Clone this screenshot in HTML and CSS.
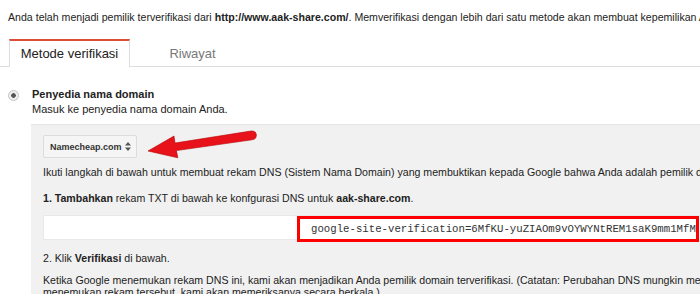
FILE: index.html
```html
<!DOCTYPE html>
<html lang="id">
<head>
  <meta charset="UTF-8" />
  <title>Metode verifikasi</title>
  <link rel="stylesheet" href="styles.css">
</head>
<body>
  <p class="notice">Anda telah menjadi pemilik terverifikasi dari <strong>http://www.aak-share.com/</strong>. Memverifikasi dengan lebih dari satu metode akan membuat kepemilikan Anda lebih aman.</p>

  <div class="tabs">
    <div class="tab active">Metode verifikasi</div>
    <div class="tab">Riwayat</div>
  </div>

  <div class="method">
    <span class="radio"></span>
    <div class="method-body">
      <div class="method-title">Penyedia nama domain</div>
      <div class="method-desc">Masuk ke penyedia nama domain Anda.</div>

      <div class="panel">
        <div class="select">
          <span>Namecheap.com</span>
          <svg width="6" height="9" viewBox="0 0 6 9"><path d="M3 0L6 3.5H0Z M3 9L0 5.5H6Z" fill="#555"/></svg>
        </div>

        <!-- annotation arrow -->
        <svg class="arrow" width="120" height="40" viewBox="0 0 120 40">
          <path d="M7 23 L33 8 L34 15 L110 3 Q115 2.6 115.4 7 Q115.4 11.4 111 11.8 L35.4 22.6 L36.8 29.8 Z" fill="#e8121a" stroke="#b30000" stroke-width="0.6" stroke-linejoin="round"/>
        </svg>

        <p class="line">Ikuti langkah di bawah untuk membuat rekam DNS (Sistem Nama Domain) yang membuktikan kepada Google bahwa Anda adalah pemilik domain tersebut.</p>
        <p class="line step"><strong>1. Tambahkan</strong> rekam TXT di bawah ke konfgurasi DNS untuk <strong>aak-share.com</strong>.</p>

        <div class="record">
          <div class="highlight">google-site-verification=6MfKU-yuZIAOm9vOYWYNtREM1saK9mm1MfM8hUxWwQk</div>
        </div>

        <p class="line step2">2. Klik <strong>Verifikasi</strong> di bawah.</p>
        <p class="line note">Ketika Google menemukan rekam DNS ini, kami akan menjadikan Anda pemilik domain terverifikasi. (Catatan: Perubahan DNS mungkin memerlukan waktu beberapa saat. Jika Google tidak<br>menemukan rekam tersebut, kami akan memeriksanya secara berkala.)</p>
      </div>
    </div>
  </div>
</body>
</html>
```

FILE: styles.css
```css
html, body {
  overflow: hidden;
}
body {
  margin: 0;
  font-family: 'Liberation Sans', Arial, sans-serif;
  font-size: 10.6px;
  color: #222;
  background: #fff;
}
.notice {
  margin: 0;
  padding: 11px 8px 0;
  line-height: 13px;
  white-space: nowrap;
}

.tabs {
  display: flex;
  margin-top: 15px;
  padding-left: 9px;
  border-bottom: 1px solid #ddd;
}
.tab {
  width: 121px;
  height: 25px;
  line-height: 25px;
  font-size: 13px;
  text-align: center;
  color: #777;
  border-top: 2px solid transparent;
  padding-left: 2px;
}
.tab.active {
  width: 119px;
  padding-left: 0;
  color: #222;
  background: #fff;
  border-top-color: #dd4b39;
  border-left: 1px solid #ddd;
  border-right: 1px solid #ddd;
  margin-bottom: -1px;
  height: 26px;
}

.method {
  display: flex;
  margin-top: 20px;
  padding-left: 8px;
}
.radio {
  width: 9px;
  height: 9px;
  margin: 3px 13px 0 0;
  border: 1px solid #c4c4c4;
  border-radius: 50%;
  background: radial-gradient(circle, #555 0 2px, #eee 2.6px);
  flex: none;
}
.method-body {
  flex: 1;
  min-width: 0;
}
.method-title {
  font-weight: bold;
  font-size: 11px;
  line-height: 14px;
}
.method-desc {
  font-size: 11px;
  line-height: 16px;
}

.panel {
  position: relative;
  margin: 7px 0 0 -1px;
  padding: 10px 0 0 12px;
  background: #f1f1f1;
  border-top: 1px solid #e4e4e4;
  height: 200px;
}
.select {
  display: flex;
  align-items: center;
  justify-content: space-between;
  width: 81px;
  height: 21px;
  padding: 0 5px 0 6px;
  font-size: 9px;
  font-weight: bold;
  color: #333;
  background: #f5f5f5;
  border: 1px solid #dcdcdc;
  border-radius: 2px;
}
.arrow {
  position: absolute;
  left: 110px;
  top: 3px;
}

.line {
  margin: 7px 0 0;
  line-height: 14px;
  white-space: nowrap;
}
.step {
  margin-top: 12px;
}
.record {
  display: flex;
  margin-top: 10px;
  height: 25px;
  padding-left: 253px;
  background: #fff;
  border: 1px solid #e8e8e8;
  border-right: none;
  box-sizing: border-box;
}
.highlight {
  flex: none;
  width: 402px;
  height: 26px;
  padding-left: 11px;
  box-sizing: border-box;
  border: 3px solid #f00;
  font-family: 'Liberation Mono', 'Courier New', monospace;
  font-size: 10.7px;
  line-height: 20px;
  white-space: nowrap;
  overflow: hidden;
  color: #333;
}
.step2 {
  margin-top: 11px;
}
.note {
  margin-top: 9px;
  line-height: 12px;
}
```
